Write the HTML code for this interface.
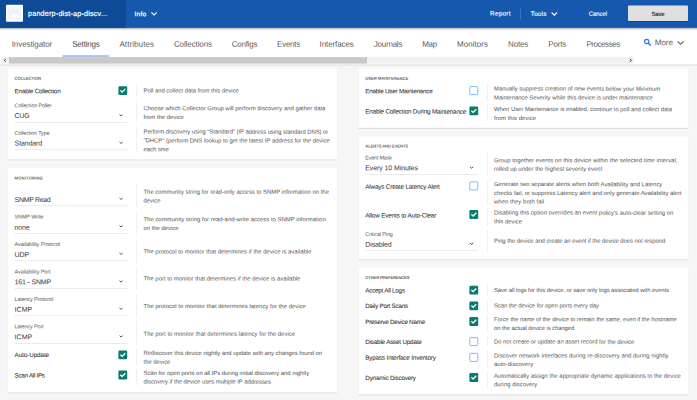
<!DOCTYPE html>
<html lang="en"><head><meta charset="utf-8"><title>Device Settings</title>
<style>
html,body{margin:0;padding:0}
body{width:697px;height:400px;overflow:hidden;background:#f6f6f6;position:relative;font-family:"Liberation Sans",sans-serif}
#app{position:absolute;left:0;top:0;width:697px;height:400px;overflow:hidden}
#bg{position:absolute;left:0;top:0}
#app span{position:absolute;left:0;top:0;white-space:nowrap;display:block;transform-origin:0 0}
</style></head><body><div id="app">

<svg id="bg" width="697" height="400" viewBox="0 0 697 400">
<defs><filter id="cs" x="-5%" y="-5%" width="110%" height="115%"><feDropShadow dx="0" dy="0.5" stdDeviation="0.5" flood-color="#000" flood-opacity="0.24"/></filter><filter id="hs" x="-2%" y="-20%" width="104%" height="160%"><feDropShadow dx="0" dy="0.6" stdDeviation="0.8" flood-color="#000" flood-opacity="0.5"/></filter><filter id="bs" x="-10%" y="-20%" width="120%" height="160%"><feDropShadow dx="0" dy="0.5" stdDeviation="0.5" flood-color="#000" flood-opacity="0.45"/></filter></defs>
<rect x="0" y="0" width="697" height="400" fill="#f6f6f6"/>
<rect x="-5" y="20" width="707" height="44.4" fill="#fff" filter="url(#cs)"/>
<rect x="1.9" y="57.1" width="631.9" height="6.5" fill="#f1f1f1"/>
<rect x="9.0" y="57.1" width="358.0" height="6.5" fill="#c9c9c9"/>
<path d="M5.8 59.0 L4.2 60.4 L5.8 61.8" fill="none" stroke="#333" stroke-width="0.95"/>
<path d="M629.8 59.0 L631.4 60.4 L629.8 61.8" fill="none" stroke="#333" stroke-width="0.95"/>
<rect x="62.5" y="55.55" width="46.8" height="0.95" fill="#4a90e2"/>
<rect x="-5" y="-5" width="707" height="32.8" fill="#1459ae" filter="url(#hs)"/>
<rect x="0" y="0" width="125.8" height="27.8" fill="#0d4b96"/>
<rect x="6" y="4.8" width="17" height="17" rx="0.8" fill="#fff"/>
<rect x="8.2" y="8.0" width="12.4" height="10.7" rx="0.6" fill="none" stroke="#dbe8fa" stroke-width="0.8"/><rect x="9.6" y="9.4" width="9.7" height="8.1" fill="#e9f1fc"/><path d="M9.6 17.5 L13.2 12.5 L15.2 14.7 L16.6 13.5 L19.3 16.9 L19.3 17.5 Z" fill="#fff"/>
<path d="M151.4 12.3 L154.1 15.0 L156.8 12.3" fill="none" stroke="#fff" stroke-width="1.1"/>
<path d="M551.6 12.5 L554.3 15.2 L557.0 12.5" fill="none" stroke="#fff" stroke-width="1.1"/>
<rect x="520.2" y="7.5" width="0.6" height="12.5" fill="#fff" fill-opacity="0.28"/>
<rect x="628" y="5.6" width="60" height="15.3" rx="1" fill="#e0e0e0" filter="url(#bs)"/>
<circle cx="646.75" cy="41.5" r="2.15" fill="none" stroke="#2a7ade" stroke-width="1.15"/><path d="M648.5 43.3 L650.4 45.2" stroke="#2a7ade" stroke-width="1.5" stroke-linecap="round"/>
<path d="M677.6 41.3 L680.6 44.3 L683.6 41.3" fill="none" stroke="#555" stroke-width="1.05"/>
<rect x="7.7" y="68.5" width="329.8" height="90.8" fill="#fff" filter="url(#cs)"/>
<rect x="7.7" y="167.9" width="329.8" height="224.4" fill="#fff" filter="url(#cs)"/>
<rect x="358.4" y="68.5" width="329.9" height="59.3" fill="#fff" filter="url(#cs)"/>
<rect x="358.4" y="136.5" width="329.9" height="122.7" fill="#fff" filter="url(#cs)"/>
<rect x="358.4" y="267.5" width="329.9" height="126.9" fill="#fff" filter="url(#cs)"/>
<rect x="135.9" y="84.6" width="0.8" height="12.4" fill="#ebebeb"/>
<rect x="135.9" y="100.4" width="0.8" height="22.6" fill="#ebebeb"/>
<rect x="135.9" y="127" width="0.8" height="26.0" fill="#ebebeb"/>
<rect x="135.9" y="183.7" width="0.8" height="23.6" fill="#ebebeb"/>
<rect x="135.9" y="211" width="0.8" height="24.8" fill="#ebebeb"/>
<rect x="135.9" y="239" width="0.8" height="24.0" fill="#ebebeb"/>
<rect x="135.9" y="266.5" width="0.8" height="24.0" fill="#ebebeb"/>
<rect x="135.9" y="294" width="0.8" height="24.0" fill="#ebebeb"/>
<rect x="135.9" y="321.5" width="0.8" height="24.0" fill="#ebebeb"/>
<rect x="135.9" y="349" width="0.8" height="16.5" fill="#ebebeb"/>
<rect x="135.9" y="369" width="0.8" height="16.6" fill="#ebebeb"/>
<rect x="486.9" y="84.6" width="0.8" height="17.1" fill="#ebebeb"/>
<rect x="486.9" y="105.1" width="0.8" height="15.9" fill="#ebebeb"/>
<rect x="486.9" y="152.4" width="0.8" height="23.6" fill="#ebebeb"/>
<rect x="486.9" y="179.8" width="0.8" height="24.6" fill="#ebebeb"/>
<rect x="486.9" y="208.2" width="0.8" height="17.4" fill="#ebebeb"/>
<rect x="486.9" y="228.8" width="0.8" height="23.7" fill="#ebebeb"/>
<rect x="486.9" y="284.7" width="0.8" height="11.1" fill="#ebebeb"/>
<rect x="486.9" y="300.5" width="0.8" height="10.5" fill="#ebebeb"/>
<rect x="486.9" y="314.7" width="0.8" height="17.5" fill="#ebebeb"/>
<rect x="486.9" y="336.3" width="0.8" height="10.4" fill="#ebebeb"/>
<rect x="486.9" y="350.5" width="0.8" height="17.4" fill="#ebebeb"/>
<rect x="486.9" y="371.7" width="0.8" height="16.7" fill="#ebebeb"/>
<rect x="14.6" y="122.1" width="112.7" height="0.6" fill="#dcdcdc"/>
<path d="M119.55 114.70 L121.10 116.00 L122.65 114.70" fill="none" stroke="#444" stroke-width="0.95"/>
<rect x="14.6" y="149.5" width="112.7" height="0.6" fill="#dcdcdc"/>
<path d="M119.55 142.10 L121.10 143.40 L122.65 142.10" fill="none" stroke="#444" stroke-width="0.95"/>
<rect x="14.6" y="205.5" width="112.7" height="0.6" fill="#dcdcdc"/>
<path d="M119.55 198.10 L121.10 199.40 L122.65 198.10" fill="none" stroke="#444" stroke-width="0.95"/>
<rect x="14.6" y="233.0" width="112.7" height="0.6" fill="#dcdcdc"/>
<path d="M119.55 225.60 L121.10 226.90 L122.65 225.60" fill="none" stroke="#444" stroke-width="0.95"/>
<rect x="14.6" y="260.5" width="112.7" height="0.6" fill="#dcdcdc"/>
<path d="M119.55 253.10 L121.10 254.40 L122.65 253.10" fill="none" stroke="#444" stroke-width="0.95"/>
<rect x="14.6" y="288.1" width="112.7" height="0.6" fill="#dcdcdc"/>
<path d="M119.55 280.70 L121.10 282.00 L122.65 280.70" fill="none" stroke="#444" stroke-width="0.95"/>
<rect x="14.6" y="315.5" width="112.7" height="0.6" fill="#dcdcdc"/>
<path d="M119.55 308.10 L121.10 309.40 L122.65 308.10" fill="none" stroke="#444" stroke-width="0.95"/>
<rect x="14.6" y="343.1" width="112.7" height="0.6" fill="#dcdcdc"/>
<path d="M119.55 335.70 L121.10 337.00 L122.65 335.70" fill="none" stroke="#444" stroke-width="0.95"/>
<rect x="365.3" y="174.3" width="112.5" height="0.6" fill="#dcdcdc"/>
<path d="M470.05 166.90 L471.60 168.20 L473.15 166.90" fill="none" stroke="#444" stroke-width="0.95"/>
<rect x="365.3" y="250.5" width="112.5" height="0.6" fill="#dcdcdc"/>
<path d="M470.05 243.10 L471.60 244.40 L473.15 243.10" fill="none" stroke="#444" stroke-width="0.95"/>
<rect x="118.4" y="86.2" width="8.8" height="8.8" rx="1.2" fill="#0b7a6f"/>
<path d="M120.4 90.4 L122.1 92.1 L125.3 88.9" fill="none" stroke="#fff" stroke-width="1.3"/>
<rect x="118.4" y="350.5" width="8.8" height="8.8" rx="1.2" fill="#0b7a6f"/>
<path d="M120.4 354.7 L122.1 356.4 L125.3 353.2" fill="none" stroke="#fff" stroke-width="1.3"/>
<rect x="118.4" y="370.6" width="8.8" height="8.8" rx="1.2" fill="#0b7a6f"/>
<path d="M120.4 374.8 L122.1 376.5 L125.3 373.3" fill="none" stroke="#fff" stroke-width="1.3"/>
<rect x="469.8" y="86.6" width="8.0" height="8.0" rx="0.8" fill="#fff" stroke="#74b2f4" stroke-width="0.9"/>
<rect x="469.4" y="106.5" width="8.8" height="8.8" rx="1.2" fill="#0b7a6f"/>
<path d="M471.4 110.7 L473.1 112.4 L476.3 109.2" fill="none" stroke="#fff" stroke-width="1.3"/>
<rect x="469.8" y="181.9" width="8.0" height="8.0" rx="0.8" fill="#fff" stroke="#74b2f4" stroke-width="0.9"/>
<rect x="469.4" y="210.1" width="8.8" height="8.8" rx="1.2" fill="#0b7a6f"/>
<path d="M471.4 214.3 L473.1 216.0 L476.3 212.8" fill="none" stroke="#fff" stroke-width="1.3"/>
<rect x="469.4" y="285.8" width="8.8" height="8.8" rx="1.2" fill="#0b7a6f"/>
<path d="M471.4 290.0 L473.1 291.7 L476.3 288.5" fill="none" stroke="#fff" stroke-width="1.3"/>
<rect x="469.4" y="301.4" width="8.8" height="8.8" rx="1.2" fill="#0b7a6f"/>
<path d="M471.4 305.6 L473.1 307.3 L476.3 304.1" fill="none" stroke="#fff" stroke-width="1.3"/>
<rect x="469.4" y="317.1" width="8.8" height="8.8" rx="1.2" fill="#0b7a6f"/>
<path d="M471.4 321.3 L473.1 323.0 L476.3 319.8" fill="none" stroke="#fff" stroke-width="1.3"/>
<rect x="469.8" y="337.6" width="8.0" height="8.0" rx="0.8" fill="#fff" stroke="#74b2f4" stroke-width="0.9"/>
<rect x="469.8" y="353.4" width="8.0" height="8.0" rx="0.8" fill="#fff" stroke="#74b2f4" stroke-width="0.9"/>
<rect x="469.4" y="373.1" width="8.8" height="8.8" rx="1.2" fill="#0b7a6f"/>
<path d="M471.4 377.3 L473.1 379.0 L476.3 375.8" fill="none" stroke="#fff" stroke-width="1.3"/>
</svg>
<span style="transform:translate(28px,8.86px) rotate(0.03deg);font-size:7.2px;line-height:10.08px;color:#fff;-webkit-text-stroke:0.2px #fff;letter-spacing:0.205px;">panderp-dist-ap-discv...</span>
<span style="transform:translate(134.5px,9.28px) rotate(0.03deg);font-size:6.6px;line-height:9.24px;color:#fff;-webkit-text-stroke:0.2px #fff;letter-spacing:0.250px;">Info</span>
<span style="transform:translate(490px,9.42px) rotate(0.03deg);font-size:6.4px;line-height:8.96px;color:#fff;-webkit-text-stroke:0.12px #fff;letter-spacing:0.269px;">Report</span>
<span style="transform:translate(530.8px,9.92px) rotate(0.03deg);font-size:6.4px;line-height:8.96px;color:#fff;-webkit-text-stroke:0.12px #fff;letter-spacing:0.156px;">Tools</span>
<span style="transform:translate(588.8px,9.80px) rotate(0.03deg);font-size:6.0px;line-height:8.4px;color:#fff;-webkit-text-stroke:0.12px #fff;letter-spacing:-0.081px;">Cancel</span>
<span style="transform:translate(651.5px,9.90px) rotate(0.03deg);font-size:6.0px;line-height:8.4px;color:#222;-webkit-text-stroke:0.12px #222;letter-spacing:-0.172px;">Save</span>
<span style="transform:translate(11.7px,38.80px) rotate(0.03deg);font-size:8.0px;line-height:11.2px;color:#5a5a5a;letter-spacing:-0.072px;">Investigator</span>
<span style="transform:translate(72.2px,38.80px) rotate(0.03deg);font-size:8.0px;line-height:11.2px;color:#444;letter-spacing:-0.188px;">Settings</span>
<span style="transform:translate(119.4px,38.80px) rotate(0.03deg);font-size:8.0px;line-height:11.2px;color:#5a5a5a;letter-spacing:0.090px;">Attributes</span>
<span style="transform:translate(173.9px,38.80px) rotate(0.03deg);font-size:8.0px;line-height:11.2px;color:#5a5a5a;letter-spacing:-0.095px;">Collections</span>
<span style="transform:translate(231.8px,38.80px) rotate(0.03deg);font-size:8.0px;line-height:11.2px;color:#5a5a5a;letter-spacing:-0.232px;">Configs</span>
<span style="transform:translate(277.1px,38.80px) rotate(0.03deg);font-size:8.0px;line-height:11.2px;color:#5a5a5a;letter-spacing:-0.278px;">Events</span>
<span style="transform:translate(319.6px,38.80px) rotate(0.03deg);font-size:8.0px;line-height:11.2px;color:#5a5a5a;letter-spacing:-0.104px;">Interfaces</span>
<span style="transform:translate(373.8px,38.80px) rotate(0.03deg);font-size:8.0px;line-height:11.2px;color:#5a5a5a;letter-spacing:-0.231px;">Journals</span>
<span style="transform:translate(422.2px,38.80px) rotate(0.03deg);font-size:8.0px;line-height:11.2px;color:#5a5a5a;letter-spacing:-0.288px;">Map</span>
<span style="transform:translate(457px,38.80px) rotate(0.03deg);font-size:8.0px;line-height:11.2px;color:#5a5a5a;letter-spacing:0.052px;">Monitors</span>
<span style="transform:translate(508.1px,38.80px) rotate(0.03deg);font-size:8.0px;line-height:11.2px;color:#5a5a5a;letter-spacing:-0.161px;">Notes</span>
<span style="transform:translate(548.3px,38.80px) rotate(0.03deg);font-size:8.0px;line-height:11.2px;color:#5a5a5a;letter-spacing:-0.194px;">Ports</span>
<span style="transform:translate(586.4px,38.80px) rotate(0.03deg);font-size:8.0px;line-height:11.2px;color:#5a5a5a;letter-spacing:-0.440px;">Processes</span>
<span style="transform:translate(654.8px,37.36px) rotate(0.03deg);font-size:8.2px;line-height:11.48px;color:#666;letter-spacing:-0.164px;">More</span>
<span style="transform:translate(14.6px,75.86px) rotate(0.03deg);font-size:4.2px;line-height:5.88px;color:#636363;font-weight:700;letter-spacing:-0.082px;">COLLECTION</span>
<span style="transform:translate(14.6px,87.19px) rotate(0.03deg);font-size:6.3px;line-height:8.82px;color:#303030;-webkit-text-stroke:0.06px #303030;letter-spacing:-0.183px;">Enable Collection</span>
<span style="transform:translate(14.6px,102.22px) rotate(0.03deg);font-size:5.4px;line-height:7.56px;color:#555;letter-spacing:-0.109px;">Collection Poller</span>
<span style="transform:translate(14.6px,111.10px) rotate(0.03deg);font-size:7.0px;line-height:9.8px;color:#363636;letter-spacing:-0.287px;">CUG</span>
<span style="transform:translate(14.6px,129.72px) rotate(0.03deg);font-size:5.4px;line-height:7.56px;color:#555;letter-spacing:-0.131px;">Collection Type</span>
<span style="transform:translate(14.6px,138.60px) rotate(0.03deg);font-size:7.0px;line-height:9.8px;color:#363636;letter-spacing:-0.128px;">Standard</span>
<span style="transform:translate(143.5px,86.47px) rotate(0.03deg);font-size:5.9px;line-height:8.26px;color:#505050;letter-spacing:-0.006px;">Poll and collect data from this device</span>
<span style="transform:translate(143.5px,104.17px) rotate(0.03deg);font-size:5.9px;line-height:8.26px;color:#505050;letter-spacing:0.012px;">Choose which Collector Group will perform discovery and gather data</span>
<span style="transform:translate(143.5px,112.97px) rotate(0.03deg);font-size:5.9px;line-height:8.26px;color:#505050;">from the device</span>
<span style="transform:translate(143.5px,127.57px) rotate(0.03deg);font-size:5.9px;line-height:8.26px;color:#505050;letter-spacing:-0.044px;">Perform discovery using "Standard" (IP address using standard DNS) or</span>
<span style="transform:translate(143.5px,136.37px) rotate(0.03deg);font-size:5.9px;line-height:8.26px;color:#505050;letter-spacing:-0.002px;">"DHCP" (perform DNS lookup to get the latest IP address for the device</span>
<span style="transform:translate(143.5px,145.17px) rotate(0.03deg);font-size:5.9px;line-height:8.26px;color:#505050;">each time</span>
<span style="transform:translate(14.6px,175.46px) rotate(0.03deg);font-size:4.2px;line-height:5.88px;color:#636363;font-weight:700;letter-spacing:0.124px;">MONITORING</span>
<span style="transform:translate(14.6px,195.10px) rotate(0.03deg);font-size:7.0px;line-height:9.8px;color:#363636;letter-spacing:-0.342px;">SNMP Read</span>
<span style="transform:translate(14.6px,213.52px) rotate(0.03deg);font-size:5.4px;line-height:7.56px;color:#555;letter-spacing:-0.077px;">SNMP Write</span>
<span style="transform:translate(14.6px,222.70px) rotate(0.03deg);font-size:7.0px;line-height:9.8px;color:#363636;letter-spacing:-0.170px;">none</span>
<span style="transform:translate(14.6px,241.02px) rotate(0.03deg);font-size:5.4px;line-height:7.56px;color:#555;letter-spacing:-0.060px;">Availability Protocol</span>
<span style="transform:translate(14.6px,249.90px) rotate(0.03deg);font-size:7.0px;line-height:9.8px;color:#363636;letter-spacing:-0.127px;">UDP</span>
<span style="transform:translate(14.6px,268.42px) rotate(0.03deg);font-size:5.4px;line-height:7.56px;color:#555;letter-spacing:-0.051px;">Availability Port</span>
<span style="transform:translate(14.6px,277.30px) rotate(0.03deg);font-size:7.0px;line-height:9.8px;color:#363636;letter-spacing:-0.173px;">161 - SNMP</span>
<span style="transform:translate(14.6px,296.02px) rotate(0.03deg);font-size:5.4px;line-height:7.56px;color:#555;letter-spacing:-0.110px;">Latency Protocol</span>
<span style="transform:translate(14.6px,304.70px) rotate(0.03deg);font-size:7.0px;line-height:9.8px;color:#363636;letter-spacing:0.025px;">ICMP</span>
<span style="transform:translate(14.6px,323.32px) rotate(0.03deg);font-size:5.4px;line-height:7.56px;color:#555;letter-spacing:-0.114px;">Latency Port</span>
<span style="transform:translate(14.6px,332.30px) rotate(0.03deg);font-size:7.0px;line-height:9.8px;color:#363636;letter-spacing:0.025px;">ICMP</span>
<span style="transform:translate(14.6px,351.09px) rotate(0.03deg);font-size:6.3px;line-height:8.82px;color:#303030;-webkit-text-stroke:0.06px #303030;letter-spacing:-0.087px;">Auto-Update</span>
<span style="transform:translate(14.6px,371.39px) rotate(0.03deg);font-size:6.3px;line-height:8.82px;color:#303030;-webkit-text-stroke:0.06px #303030;letter-spacing:-0.292px;">Scan All IPs</span>
<span style="transform:translate(143.5px,187.77px) rotate(0.03deg);font-size:5.9px;line-height:8.26px;color:#505050;letter-spacing:0.008px;">The community string for read-only access to SNMP information on the</span>
<span style="transform:translate(143.5px,196.57px) rotate(0.03deg);font-size:5.9px;line-height:8.26px;color:#505050;">device</span>
<span style="transform:translate(143.5px,215.17px) rotate(0.03deg);font-size:5.9px;line-height:8.26px;color:#505050;letter-spacing:0.029px;">The community string for read-and-write access to SNMP information</span>
<span style="transform:translate(143.5px,224.07px) rotate(0.03deg);font-size:5.9px;line-height:8.26px;color:#505050;">on the device</span>
<span style="transform:translate(143.5px,247.37px) rotate(0.03deg);font-size:5.9px;line-height:8.26px;color:#505050;letter-spacing:0.020px;">The protocol to monitor that determines if the device is available</span>
<span style="transform:translate(143.5px,274.37px) rotate(0.03deg);font-size:5.9px;line-height:8.26px;color:#505050;letter-spacing:0.015px;">The port to monitor that determines if the device is available</span>
<span style="transform:translate(143.5px,302.07px) rotate(0.03deg);font-size:5.9px;line-height:8.26px;color:#505050;letter-spacing:0.037px;">The protocol to monitor that determines latency for the device</span>
<span style="transform:translate(143.5px,329.67px) rotate(0.03deg);font-size:5.9px;line-height:8.26px;color:#505050;letter-spacing:0.039px;">The port to monitor that determines latency for the device</span>
<span style="transform:translate(143.5px,348.87px) rotate(0.03deg);font-size:5.9px;line-height:8.26px;color:#505050;letter-spacing:-0.029px;">Rediscover this device nightly and update with any changes found on</span>
<span style="transform:translate(143.5px,357.67px) rotate(0.03deg);font-size:5.9px;line-height:8.26px;color:#505050;">the device</span>
<span style="transform:translate(143.5px,368.87px) rotate(0.03deg);font-size:5.9px;line-height:8.26px;color:#505050;letter-spacing:-0.021px;">Scan for open ports on all IPs during initial discovery and nightly</span>
<span style="transform:translate(143.5px,377.57px) rotate(0.03deg);font-size:5.9px;line-height:8.26px;color:#505050;letter-spacing:-0.048px;">discovery if the device uses multiple IP addresses</span>
<span style="transform:translate(365.3px,75.86px) rotate(0.03deg);font-size:4.2px;line-height:5.88px;color:#636363;font-weight:700;letter-spacing:-0.047px;">USER MAINTENANCE</span>
<span style="transform:translate(365.3px,87.19px) rotate(0.03deg);font-size:6.3px;line-height:8.82px;color:#303030;-webkit-text-stroke:0.06px #303030;letter-spacing:-0.233px;">Enable User Maintenance</span>
<span style="transform:translate(365.3px,107.59px) rotate(0.03deg);font-size:6.3px;line-height:8.82px;color:#303030;-webkit-text-stroke:0.06px #303030;letter-spacing:-0.178px;">Enable Collection During Maintenance</span>
<span style="transform:translate(494.0px,84.57px) rotate(0.03deg);font-size:5.9px;line-height:8.26px;color:#505050;letter-spacing:0.013px;">Manually suppress creation of new events below your Minimum</span>
<span style="transform:translate(494.0px,93.47px) rotate(0.03deg);font-size:5.9px;line-height:8.26px;color:#505050;letter-spacing:-0.006px;">Maintenance Severity while this device is under maintenance</span>
<span style="transform:translate(494.0px,105.07px) rotate(0.03deg);font-size:5.9px;line-height:8.26px;color:#505050;letter-spacing:-0.015px;">When User Maintenance is enabled, continue to poll and collect data</span>
<span style="transform:translate(494.0px,113.97px) rotate(0.03deg);font-size:5.9px;line-height:8.26px;color:#505050;letter-spacing:0.047px;">from this device</span>
<span style="transform:translate(365.3px,143.56px) rotate(0.03deg);font-size:4.2px;line-height:5.88px;color:#636363;font-weight:700;letter-spacing:-0.121px;">ALERTS AND EVENTS</span>
<span style="transform:translate(365.3px,154.52px) rotate(0.03deg);font-size:5.4px;line-height:7.56px;color:#555;letter-spacing:-0.177px;">Event Mask</span>
<span style="transform:translate(365.3px,163.30px) rotate(0.03deg);font-size:7.0px;line-height:9.8px;color:#363636;letter-spacing:-0.100px;">Every 10 Minutes</span>
<span style="transform:translate(365.3px,182.79px) rotate(0.03deg);font-size:6.3px;line-height:8.82px;color:#303030;-webkit-text-stroke:0.06px #303030;letter-spacing:-0.161px;">Always Create Latency Alert</span>
<span style="transform:translate(365.3px,211.49px) rotate(0.03deg);font-size:6.3px;line-height:8.82px;color:#303030;-webkit-text-stroke:0.06px #303030;letter-spacing:-0.141px;">Allow Events to Auto-Clear</span>
<span style="transform:translate(365.3px,231.02px) rotate(0.03deg);font-size:5.4px;line-height:7.56px;color:#555;letter-spacing:-0.105px;">Critical Ping</span>
<span style="transform:translate(365.3px,239.70px) rotate(0.03deg);font-size:7.0px;line-height:9.8px;color:#363636;letter-spacing:-0.131px;">Disabled</span>
<span style="transform:translate(494.0px,156.17px) rotate(0.03deg);font-size:5.9px;line-height:8.26px;color:#505050;letter-spacing:0.028px;">Group together events on this device within the selected time interval,</span>
<span style="transform:translate(494.0px,164.67px) rotate(0.03deg);font-size:5.9px;line-height:8.26px;color:#505050;letter-spacing:0.013px;">rolled up under the highest severity event</span>
<span style="transform:translate(494.0px,180.07px) rotate(0.03deg);font-size:5.9px;line-height:8.26px;color:#505050;letter-spacing:0.012px;">Generate two separate alerts when both Availability and Latency</span>
<span style="transform:translate(494.0px,188.97px) rotate(0.03deg);font-size:5.9px;line-height:8.26px;color:#505050;letter-spacing:-0.005px;">checks fail, or suppress Latency alert and only generate Availability alert</span>
<span style="transform:translate(494.0px,197.47px) rotate(0.03deg);font-size:5.9px;line-height:8.26px;color:#505050;letter-spacing:0.057px;">when they both fail</span>
<span style="transform:translate(494.0px,208.57px) rotate(0.03deg);font-size:5.9px;line-height:8.26px;color:#505050;letter-spacing:0.010px;">Disabling this option overrides an event policy's auto-clear setting on</span>
<span style="transform:translate(494.0px,217.37px) rotate(0.03deg);font-size:5.9px;line-height:8.26px;color:#505050;letter-spacing:0.023px;">this device</span>
<span style="transform:translate(494.0px,236.67px) rotate(0.03deg);font-size:5.9px;line-height:8.26px;color:#505050;letter-spacing:-0.047px;">Ping the device and create an event if the device does not respond</span>
<span style="transform:translate(365.3px,275.06px) rotate(0.03deg);font-size:4.2px;line-height:5.88px;color:#636363;font-weight:700;letter-spacing:-0.190px;">OTHER PREFERENCES</span>
<span style="transform:translate(365.3px,286.39px) rotate(0.03deg);font-size:6.3px;line-height:8.82px;color:#303030;-webkit-text-stroke:0.06px #303030;letter-spacing:-0.237px;">Accept All Logs</span>
<span style="transform:translate(365.3px,302.09px) rotate(0.03deg);font-size:6.3px;line-height:8.82px;color:#303030;-webkit-text-stroke:0.06px #303030;letter-spacing:-0.253px;">Daily Port Scans</span>
<span style="transform:translate(365.3px,317.89px) rotate(0.03deg);font-size:6.3px;line-height:8.82px;color:#303030;-webkit-text-stroke:0.06px #303030;letter-spacing:-0.258px;">Preserve Device Name</span>
<span style="transform:translate(365.3px,337.99px) rotate(0.03deg);font-size:6.3px;line-height:8.82px;color:#303030;-webkit-text-stroke:0.06px #303030;letter-spacing:-0.196px;">Disable Asset Update</span>
<span style="transform:translate(365.3px,353.79px) rotate(0.03deg);font-size:6.3px;line-height:8.82px;color:#303030;-webkit-text-stroke:0.06px #303030;letter-spacing:-0.160px;">Bypass Interface Inventory</span>
<span style="transform:translate(365.3px,373.89px) rotate(0.03deg);font-size:6.3px;line-height:8.82px;color:#303030;-webkit-text-stroke:0.06px #303030;letter-spacing:-0.199px;">Dynamic Discovery</span>
<span style="transform:translate(494.0px,285.97px) rotate(0.03deg);font-size:5.9px;line-height:8.26px;color:#505050;letter-spacing:-0.069px;">Save all logs for this device, or save only logs associated with events</span>
<span style="transform:translate(494.0px,301.47px) rotate(0.03deg);font-size:5.9px;line-height:8.26px;color:#505050;letter-spacing:-0.057px;">Scan the device for open ports every day</span>
<span style="transform:translate(494.0px,315.17px) rotate(0.03deg);font-size:5.9px;line-height:8.26px;color:#505050;letter-spacing:-0.051px;">Force the name of the device to remain the same, even if the hostname</span>
<span style="transform:translate(494.0px,323.97px) rotate(0.03deg);font-size:5.9px;line-height:8.26px;color:#505050;letter-spacing:-0.075px;">on the actual device is changed</span>
<span style="transform:translate(494.0px,337.57px) rotate(0.03deg);font-size:5.9px;line-height:8.26px;color:#505050;letter-spacing:-0.017px;">Do not create or update an asset record for the device</span>
<span style="transform:translate(494.0px,351.47px) rotate(0.03deg);font-size:5.9px;line-height:8.26px;color:#505050;letter-spacing:0.036px;">Discover network interfaces during re-discovery and during nightly</span>
<span style="transform:translate(494.0px,359.97px) rotate(0.03deg);font-size:5.9px;line-height:8.26px;color:#505050;letter-spacing:0.063px;">auto-discovery</span>
<span style="transform:translate(494.0px,371.67px) rotate(0.03deg);font-size:5.9px;line-height:8.26px;color:#505050;letter-spacing:0.008px;">Automatically assign the appropriate dynamic applications to the device</span>
<span style="transform:translate(494.0px,380.17px) rotate(0.03deg);font-size:5.9px;line-height:8.26px;color:#505050;letter-spacing:0.025px;">during discovery</span>
</div></body></html>
